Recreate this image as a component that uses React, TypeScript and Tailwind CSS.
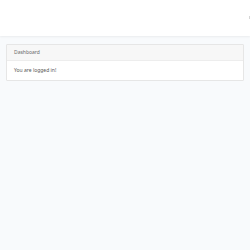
import React from "react";

const App: React.FC = () => {
    return (
        <div className="flex flex-col w-[250px] h-[250px] bg-[#f8fafc] overflow-hidden" style={{ fontFamily: '"Noto Sans", "Liberation Sans", sans-serif' }}>
            <nav className="h-[36px] bg-white shadow-[0_1px_2px_rgba(0,0,0,0.06)] flex items-center justify-end shrink-0">
                <span className="w-[1px] h-[3px] bg-[#d5d5d5] mt-[-2px]"></span>
            </nav>
            <main className="pt-[8px] px-[6px]">
                <div className="bg-white border border-[#e6e6e6] rounded-[1px] w-[238px]">
                    <div className="h-[16px] bg-[#f7f7f7] border-b border-[#ededed] flex items-center px-[7px] text-[5px] text-[#6b6b6b]">
                        Dashboard
                    </div>
                    <div className="h-[19px] flex items-center px-[7px] text-[5px] text-[#555]">
                        You are logged in!
                    </div>
                </div>
            </main>
        </div>
    );
};

export default App;
